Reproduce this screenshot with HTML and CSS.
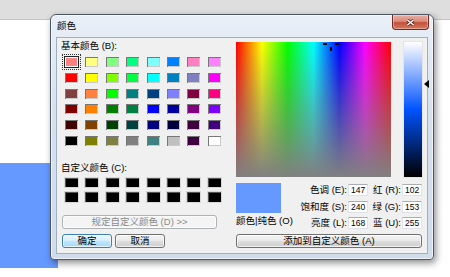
FILE: index.html
```html
<!DOCTYPE html>
<html>
<head>
<meta charset="utf-8">
<link rel="stylesheet" href="styles.css">
</head>
<body>
<div class="desk">
  <div class="topband"></div>
  <div class="bluebox"></div>
</div>
<div class="dialog">
  <div class="titlebar">
    <span class="title">颜色</span>
    <div class="close">
      <svg width="9" height="7" viewBox="0 0 9 7"><path d="M1.5 1 L7.5 6 M7.5 1 L1.5 6" stroke="#5a2016" stroke-width="3"/><path d="M1.5 1 L7.5 6 M7.5 1 L1.5 6" stroke="#fff" stroke-width="1.6"/></svg>
    </div>
  </div>
  <div class="client">
    <div class="left">
      <div class="lbl lbl-basic">基本颜色 (B):</div>
      <div class="swatches basic">
        <div class="sw sel" style="background:#ff8080"></div>
        <div class="sw" style="background:#ffff80"></div>
        <div class="sw" style="background:#80ff80"></div>
        <div class="sw" style="background:#00ff80"></div>
        <div class="sw" style="background:#80ffff"></div>
        <div class="sw" style="background:#0080ff"></div>
        <div class="sw" style="background:#ff80c0"></div>
        <div class="sw" style="background:#ff80ff"></div>
        <div class="sw" style="background:#ff0000"></div>
        <div class="sw" style="background:#ffff00"></div>
        <div class="sw" style="background:#80ff00"></div>
        <div class="sw" style="background:#00ff40"></div>
        <div class="sw" style="background:#00ffff"></div>
        <div class="sw" style="background:#0080c0"></div>
        <div class="sw" style="background:#8080c0"></div>
        <div class="sw" style="background:#ff00ff"></div>
        <div class="sw" style="background:#804040"></div>
        <div class="sw" style="background:#ff8040"></div>
        <div class="sw" style="background:#00ff00"></div>
        <div class="sw" style="background:#008080"></div>
        <div class="sw" style="background:#004080"></div>
        <div class="sw" style="background:#8080ff"></div>
        <div class="sw" style="background:#800040"></div>
        <div class="sw" style="background:#ff0080"></div>
        <div class="sw" style="background:#800000"></div>
        <div class="sw" style="background:#ff8000"></div>
        <div class="sw" style="background:#008000"></div>
        <div class="sw" style="background:#008040"></div>
        <div class="sw" style="background:#0000ff"></div>
        <div class="sw" style="background:#0000a0"></div>
        <div class="sw" style="background:#800080"></div>
        <div class="sw" style="background:#8000ff"></div>
        <div class="sw" style="background:#400000"></div>
        <div class="sw" style="background:#804000"></div>
        <div class="sw" style="background:#004000"></div>
        <div class="sw" style="background:#004040"></div>
        <div class="sw" style="background:#000080"></div>
        <div class="sw" style="background:#000040"></div>
        <div class="sw" style="background:#400040"></div>
        <div class="sw" style="background:#400080"></div>
        <div class="sw" style="background:#000000"></div>
        <div class="sw" style="background:#808000"></div>
        <div class="sw" style="background:#808040"></div>
        <div class="sw" style="background:#808080"></div>
        <div class="sw" style="background:#408080"></div>
        <div class="sw" style="background:#c0c0c0"></div>
        <div class="sw" style="background:#400040"></div>
        <div class="sw" style="background:#ffffff"></div>
      </div>
      <div class="lbl lbl-custom">自定义颜色 (C):</div>
      <div class="swatches custom">
        <div class="sw"></div><div class="sw"></div><div class="sw"></div><div class="sw"></div>
        <div class="sw"></div><div class="sw"></div><div class="sw"></div><div class="sw"></div>
        <div class="sw"></div><div class="sw"></div><div class="sw"></div><div class="sw"></div>
        <div class="sw"></div><div class="sw"></div><div class="sw"></div><div class="sw"></div>
      </div>
      <div class="btn btn-define">规定自定义颜色 (D) &gt;&gt;</div>
      <div class="btnrow">
        <div class="btn btn-ok">确定</div>
        <div class="btn">取消</div>
      </div>
    </div>
    <div class="right">
      <div class="pickrow">
        <div class="spectrum">
          <span class="ch ch-l"></span>
          <span class="ch ch-r"></span>
          <span class="ch ch-b"></span>
        </div>
        <div class="lum">
          <span class="arrow"></span>
        </div>
      </div>
      <div class="fields">
        <div class="preview"></div>
        <div class="flbl r1 c2">色调 (E):</div>
        <div class="inp r1 c3">147</div>
        <div class="flbl r1 c4">红 (R):</div>
        <div class="inp r1 c5">102</div>
        <div class="flbl r2 c2">饱和度 (S):</div>
        <div class="inp r2 c3">240</div>
        <div class="flbl r2 c4">绿 (G):</div>
        <div class="inp r2 c5">153</div>
        <div class="solid">颜色|纯色 (O)</div>
        <div class="flbl r3 c2">亮度 (L):</div>
        <div class="inp r3 c3">168</div>
        <div class="flbl r3 c4">蓝 (U):</div>
        <div class="inp r3 c5">255</div>
      </div>
      <div class="btn btn-add">添加到自定义颜色 (A)</div>
    </div>
  </div>
</div>
</body>
</html>
```
FILE: styles.css
```css
* { box-sizing: border-box; }
html, body { margin: 0; padding: 0; }
body {
  width: 450px;
  height: 277px;
  overflow: hidden;
  background: #fff;
  position: relative;
  font-family: "Liberation Sans", "Noto Sans CJK SC", sans-serif;
  font-size: 9.5px;
  color: #000;
}
.desk { display: flex; flex-direction: column; }
.topband { height: 20px; background: #dedede; border-bottom: 1px solid #c4c4c4; }
.bluebox { width: 58px; height: 105px; margin-top: 143px; background: #6699ff; }

.dialog {
  position: absolute;
  left: 50px;
  top: 14px;
  width: 384px;
  height: 246px;
  border: 1px solid #4d5866;
  border-radius: 6px 6px 4px 4px;
  background: linear-gradient(#e9eff7, #d6e1ee 40%, #cfdcea);
  box-shadow: 2px 3px 7px rgba(0,0,0,.45), inset 0 0 0 1px rgba(255,255,255,.6);
  display: flex;
  flex-direction: column;
  padding: 0 5px 5px 5px;
}
.titlebar { height: 22px; display: flex; justify-content: space-between; align-items: flex-start; }
.title { margin-top: 5px; margin-left: 1px; line-height: 12px; }
.close {
  width: 37px;
  height: 15px;
  margin-right: -1px;
  border: 1px solid #6d2b22;
  border-top: none;
  border-radius: 0 0 4px 4px;
  background: linear-gradient(#eab0a4, #d98a7a 45%, #c5503a 55%, #d47a62);
  box-shadow: inset 0 0 0 1px rgba(255,255,255,.35);
  display: flex;
  align-items: center;
  justify-content: center;
}
.close svg { display: block; }

.client {
  flex: 1;
  background: #f0f0f0;
  border: 1px solid #9fb0c4;
  display: flex;
  gap: 19px;
  padding-left: 5px;
}
.left { width: 155px; display: flex; flex-direction: column; }
.lbl { line-height: 12px; height: 12px; white-space: nowrap; }
.lbl-basic { margin-top: 2px; margin-left: -1px; }
.swatches { display: grid; grid-template-columns: repeat(8, 13px); column-gap: 7.4px; margin-left: 3px; }
.basic { grid-auto-rows: 10px; row-gap: 5.8px; margin-top: 5px; }
.sw { box-shadow: inset 1px 1px 0 #777, inset -1px -1px 0 #c9c9c9; }
.sw.sel {
  box-shadow: 0 0 0 1px #222, inset 0 0 0 1px #fff;
  outline: 1px dotted #333;
  outline-offset: 2px;
}
.lbl-custom { margin-top: 16px; margin-left: -1px; }
.custom { grid-auto-rows: 9.5px; row-gap: 5px; margin-top: 4px; }
.custom .sw { background: #000; box-shadow: inset 1px 1px 0 #555, 0 0 0 1px #d8d8d8; }

.btn {
  height: 14px;
  border: 1px solid #707070;
  border-radius: 3px;
  background: linear-gradient(#f3f3f3, #ebebeb 45%, #dddddd 50%, #cfcfcf);
  box-shadow: inset 0 0 0 1px rgba(255,255,255,.7);
  display: flex;
  align-items: center;
  justify-content: center;
  line-height: 12px;
  white-space: nowrap;
}
.btn-define { margin-top: 13px; color: #8a8a8a; border-color: #adb2b5; background: #f4f4f4; }
.btnrow { display: flex; gap: 3px; margin-top: 5px; }
.btnrow .btn { width: 50px; }
.btn-ok {
  border-color: #3c7fb1;
  background: linear-gradient(#eaf6fd, #d9f0fc 45%, #bee6fd 50%, #a7d9f5);
}

.right { width: 191px; display: flex; flex-direction: column; }
.pickrow { display: flex; gap: 13px; margin-top: 4px; }
.spectrum {
  width: 155px;
  height: 135px;
  position: relative;
  background:
    linear-gradient(to bottom, rgba(128,128,128,0), #808080),
    linear-gradient(to right, #f00, #ff0 16.67%, #0f0 33.33%, #0ff 50%, #00f 66.67%, #f0f 83.33%, #f00);
}
.ch { position: absolute; background: #000; }
.ch-l { left: 87px; top: 1px; width: 4px; height: 2px; }
.ch-r { left: 99px; top: 1px; width: 4px; height: 2px; }
.ch-b { left: 94px; top: 5px; width: 2px; height: 4px; }
.lum {
  width: 18px;
  height: 135px;
  position: relative;
  background: linear-gradient(#fff, #0053ff 50%, #000);
  box-shadow: 0 0 0 1px #e4e4e4;
}
.arrow {
  position: absolute;
  left: 20px;
  top: 38px;
  width: 0;
  height: 0;
  border-top: 4px solid transparent;
  border-bottom: 4px solid transparent;
  border-right: 5px solid #000;
}

.fields {
  display: grid;
  grid-template-columns: 45px 67px 20px 34px 20px;
  grid-template-rows: repeat(3, 12px);
  row-gap: 4.5px;
  margin-top: 7px;
}
.preview { grid-row: 1 / 3; grid-column: 1; height: 30px; margin-top: -1px; background: #6699ff; }
.solid { grid-row: 3; grid-column: 1; white-space: nowrap; line-height: 12px; margin-top: -2px; }
.r1 { grid-row: 1; } .r2 { grid-row: 2; } .r3 { grid-row: 3; }
.c2 { grid-column: 2; } .c3 { grid-column: 3; } .c4 { grid-column: 4; } .c5 { grid-column: 5; }
.flbl { text-align: right; padding-right: 1px; line-height: 12px; white-space: nowrap; }
.inp {
  background: #fff;
  border: 1px solid #e2e3ea;
  border-top-color: #abadb3;
  font-size: 8.5px;
  line-height: 10px;
  padding-left: 2px;
}
.btn-add { margin-top: 5px; width: 186px; }
```
